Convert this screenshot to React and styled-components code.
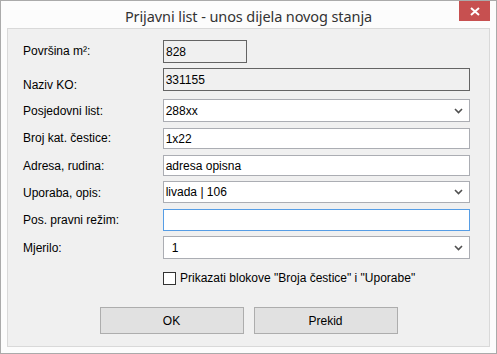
import React from 'react'
import styled, { createGlobalStyle } from 'styled-components'

const Global = createGlobalStyle`
html, body {
  margin: 0;
  padding: 0;
  background: #ffffff;
}
body {
  font-family: "Liberation Sans", Arial, sans-serif;
}
`

const Window = styled.div`
width: 497px;
height: 354px;
box-sizing: border-box;
border: 1px solid #aaaaaa;
background: #fcfcfc;
display: flex;
flex-direction: column;
padding: 0 6px 6px 6px;
`
const TitleBar = styled.div`
height: 29px;
display: grid;
grid-template-columns: 1fr auto 1fr;
align-items: start;
margin: 0 -6px 0 -6px;
`
const Title = styled.div`
grid-column: 2;
font-family: "Noto Sans", "Open Sans", sans-serif;
font-size: 14.5px;
color: #333333;
padding-top: 5px;
letter-spacing: -0.1px;
`
const CloseButton = styled.div`
grid-column: 3;
justify-self: end;
margin-right: 6px;
width: 31px;
height: 20px;
background: #c75050;
display: flex;
align-items: center;
justify-content: center;
`
const Panel = styled.div`
flex: 1;
border: 1px solid #d9d9d9;
background: #f0f0f0;
padding: 11px 19px 12px 15px;
display: flex;
flex-direction: column;
`
const Row = styled.div`
display: flex;
align-items: flex-start;
margin-top: ${p => p.$mt || 0}px;
`
const Label = styled.div`
width: 140px;
font-size: 12px;
color: #000;
padding-top: ${p => p.$pt || 0}px;
white-space: nowrap;
`
const Field = styled.div`
box-sizing: border-box;
width: ${p => p.$w ? p.$w + 'px' : '308px'};
height: ${p => p.$h}px;
border: 1px solid ${p => p.$border};
background: ${p => p.$bg};
font-size: 12px;
color: #000;
display: flex;
align-items: center;
justify-content: space-between;
padding: 0 6px 0 ${p => p.$pl || 2}px;
`
const Chevron = () => (
    <svg width="9" height="6" viewBox="0 0 9 6">
        <polyline points="1,1 4.5,4.5 8,1" fill="none" stroke="#505050" strokeWidth="1.6" />
    </svg>
)
const CheckRow = styled.div`
display: flex;
align-items: center;
margin-top: 12px;
padding-left: 140px;
font-size: 12px;
color: #000;
`
const Box = styled.div`
box-sizing: border-box;
width: 13px;
height: 13px;
border: 1px solid #333333;
background: #ffffff;
margin-right: 4px;
`
const Buttons = styled.div`
display: flex;
justify-content: center;
gap: 10px;
margin-top: 22px;
margin-left: -15px;
margin-right: -19px;
`
const Button = styled.div`
box-sizing: border-box;
width: 144px;
height: 27px;
border: 1px solid #adadad;
background: #e1e1e1;
font-size: 12px;
color: #000;
display: flex;
align-items: center;
justify-content: center;
`

const readonly = { $border: '#646464', $bg: '#f0f0f0' }
const normal = { $border: '#abadb3', $bg: '#ffffff' }

const App = () => {
    return (
        <>
            <Global />
            <Window>
                <TitleBar>
                    <Title>Prijavni list - unos dijela novog stanja</Title>
                    <CloseButton>
                        <svg width="10" height="9" viewBox="0 0 10 9">
                            <path d="M1 1 L9 8 M9 1 L1 8" stroke="#ffffff" strokeWidth="2" />
                        </svg>
                    </CloseButton>
                </TitleBar>
                <Panel>
                    <Row>
                        <Label $pt={4}>Površina m²:</Label>
                        <Field {...readonly} $w={84} $h={23}>828</Field>
                    </Row>
                    <Row $mt={5}>
                        <Label $pt={10}>Naziv KO:</Label>
                        <Field {...readonly} $h={23}>331155</Field>
                    </Row>
                    <Row $mt={7}>
                        <Label $pt={5}>Posjedovni list:</Label>
                        <Field {...normal} $h={23}>288xx<Chevron /></Field>
                    </Row>
                    <Row $mt={6}>
                        <Label $pt={3}>Broj kat. čestice:</Label>
                        <Field {...normal} $h={21}>1x22</Field>
                    </Row>
                    <Row $mt={6}>
                        <Label $pt={4}>Adresa, rudina:</Label>
                        <Field {...normal} $h={21}>adresa opisna</Field>
                    </Row>
                    <Row $mt={5}>
                        <Label $pt={5}>Uporaba, opis:</Label>
                        <Field {...normal} $h={22}>livada | 106<Chevron /></Field>
                    </Row>
                    <Row $mt={6}>
                        <Label $pt={4}>Pos. pravni režim:</Label>
                        <Field $border="#569de5" $bg="#ffffff" $h={22}></Field>
                    </Row>
                    <Row $mt={5}>
                        <Label $pt={5}>Mjerilo:</Label>
                        <Field {...normal} $h={23} $pl={8}>1<Chevron /></Field>
                    </Row>
                    <CheckRow>
                        <Box />
                        Prikazati blokove "Broja čestice" i "Uporabe"
                    </CheckRow>
                    <Buttons>
                        <Button>OK</Button>
                        <Button>Prekid</Button>
                    </Buttons>
                </Panel>
            </Window>
        </>
    )
}

export default App
